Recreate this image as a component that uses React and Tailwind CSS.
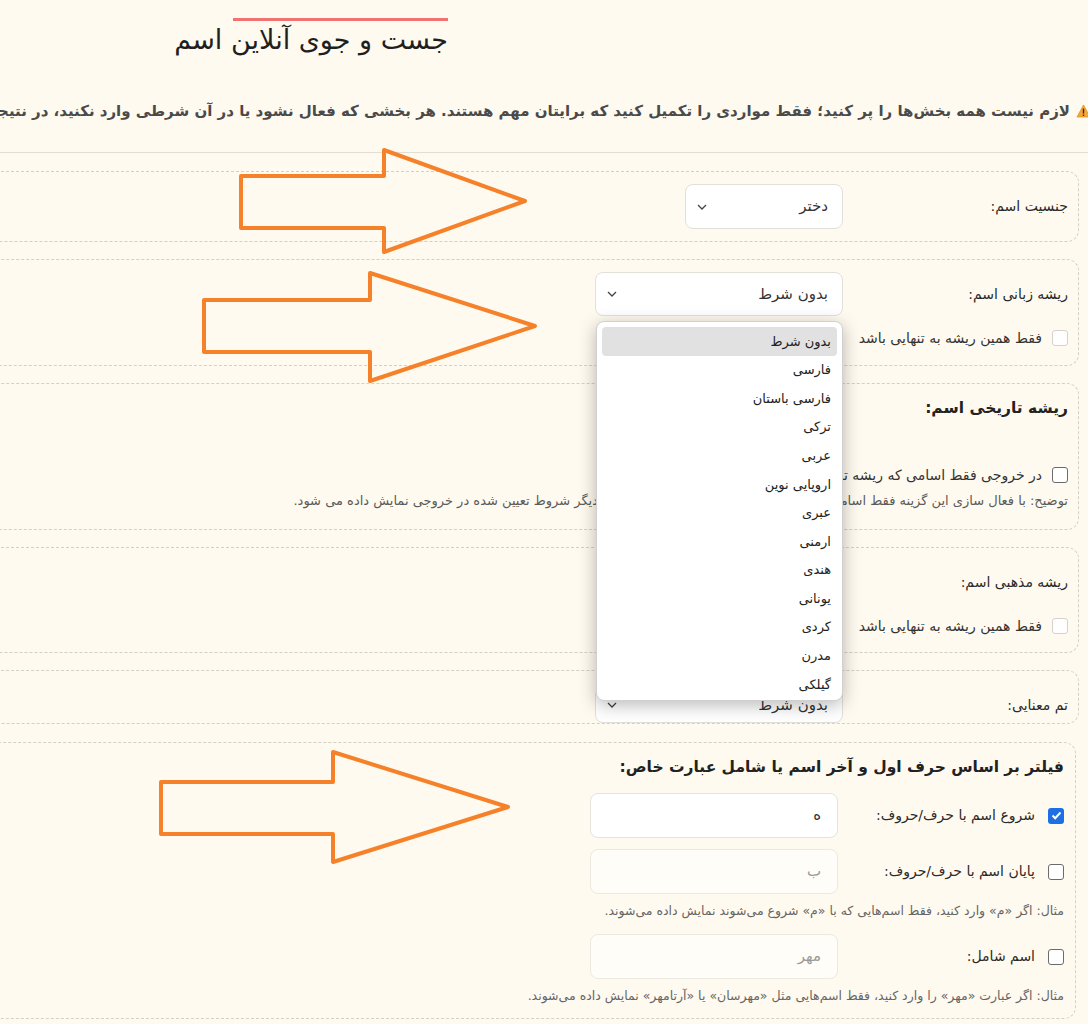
import { useState } from 'react';

const options = [
  'بدون شرط',
  'فارسی',
  'فارسی باستان',
  'ترکی',
  'عربی',
  'اروپایی نوین',
  'عبری',
  'ارمنی',
  'هندی',
  'یونانی',
  'کردی',
  'مدرن',
  'گیلکی',
];

function Chevron() {
  return (
    <svg width="10" height="6" viewBox="0 0 10 6" className="shrink-0">
      <polyline points="1,1 5,5 9,1" fill="none" stroke="#444" strokeWidth="1.3" />
    </svg>
  );
}

function Select({ value, width = 'w-[248px]', height = 'h-[44px]' }) {
  return (
    <div className={`${width} ${height} shrink-0 bg-white border border-[#e2e0da] rounded-lg flex items-center justify-between pr-[14px] pl-[11px] text-[15px] text-[#333]`}>
      <span>{value}</span>
      <Chevron />
    </div>
  );
}

function Box({ checked, faded }) {
  if (checked) {
    return (
      <span className="w-[16px] h-[16px] shrink-0 rounded-[3px] bg-[#1d6fe3] flex items-center justify-center">
        <svg width="11" height="9" viewBox="0 0 11 9">
          <polyline points="1.5,4.5 4.2,7.2 9.5,1.5" fill="none" stroke="#fff" strokeWidth="2" />
        </svg>
      </span>
    );
  }
  return (
    <span
      className={`w-[16px] h-[16px] shrink-0 rounded-[3px] bg-white border ${faded ? 'border-[#d6d3cc]' : 'border-[#6b6b6b]'}`}
    />
  );
}

function Section({ children, className = '' }) {
  return (
    <div className={`w-[1400px] mr-[9px] border border-dashed border-[#d3d0c8] rounded-xl pr-[10px] ${className}`}>
      {children}
    </div>
  );
}

export default function App() {
  const [open] = useState(true);

  return (
    <div className="relative w-[1088px] h-[1024px] overflow-hidden bg-[#fffaef] font-['DejaVu_Sans',sans-serif] text-[#2b2b2b]">
      <div dir="rtl" className="flex flex-col items-start">
        {/* title */}
        <div className="mr-[640px] pt-[18px] flex flex-col items-start">
          <div className="w-[215px] h-[3px] bg-[#f07270]" />
          <h1 className="mt-[1px] text-[27px] leading-[36px] font-normal text-[#1f1f1f] whitespace-nowrap">
            جست و جوی آنلاین اسم
          </h1>
        </div>

        {/* notice */}
        <div className="mt-[42px] mr-[-3px] flex items-center gap-[6px] whitespace-nowrap text-[15px] font-bold text-[#4a4a4a] leading-[22px]">
          <svg width="15" height="14" viewBox="0 0 15 14" className="shrink-0">
            <path d="M7.5 1 L14 13 H1 Z" fill="#f4a736" stroke="#e0902a" strokeWidth="0.8" strokeLinejoin="round" />
            <rect x="6.8" y="4.6" width="1.4" height="5" fill="#3a2a10" />
            <rect x="6.8" y="10.6" width="1.4" height="1.4" fill="#3a2a10" />
          </svg>
          <span>
            لازم نیست همه بخش‌ها را پر کنید؛ فقط مواردی را تکمیل کنید که برایتان مهم هستند. هر بخشی که فعال نشود یا در آن شرطی وارد نکنید، در نتیجه جستجو تأثیری نخواهد داشت.
          </span>
        </div>

        <div className="mt-[30px] w-full h-px bg-[#e3ded2]" />

        {/* gender */}
        <Section className="mt-[18px] py-3">
          <div className="flex items-center">
            <label className="w-[225px] shrink-0 text-[14px] font-medium text-[#2a2a2a]">جنسیت اسم:</label>
            <Select value="دختر" width="w-[158px]" height="h-[45px]" />
          </div>
        </Section>

        {/* language root */}
        <Section className="mt-[17px] pt-3 pb-[17px]">
          <div className="flex items-center">
            <label className="w-[225px] shrink-0 text-[14px] font-medium text-[#2a2a2a]">ریشه زبانی اسم:</label>
            <Select value="بدون شرط" />
          </div>
          <div className="mt-[12px] flex items-center gap-[10px] h-[20px] text-[14px] text-[#333]">
            <Box faded />
            <span>فقط همین ریشه به تنهایی باشد</span>
          </div>
        </Section>

        {/* historical root */}
        <Section className="mt-[17px] pt-3 pb-[18px]">
          <h3 className="text-[15.5px] leading-[24px] font-bold text-[#222]">ریشه تاریخی اسم:</h3>
          <div className="mt-[45px] flex items-center gap-[10px] h-[20px] text-[14px] text-[#333]">
            <Box />
            <span>در خروجی فقط اسامی که ریشه تاریخی مشخص دارند</span>
          </div>
          <p className="mt-[6px] text-[13px] leading-[20px] text-[#5a5a5a] whitespace-nowrap">
            توضیح: با فعال سازی این گزینه فقط اسامی که ریشه تاریخی آنها مطابق انتخاب است، دیگر شروط تعیین شده در خروجی نمایش داده می شود.
          </p>
        </Section>

        {/* religious root */}
        <Section className="mt-[17px] pt-3 pb-[16px]">
          <div className="flex items-center">
            <label className="w-[225px] shrink-0 text-[14px] font-medium text-[#2a2a2a]">ریشه مذهبی اسم:</label>
            <div className="w-[246px] h-[44px] shrink-0" />
          </div>
          <div className="mt-[12px] flex items-center gap-[10px] h-[20px] text-[14px] text-[#333]">
            <Box faded />
            <span>فقط همین ریشه به تنهایی باشد</span>
          </div>
        </Section>

        {/* theme */}
        <Section className="mt-[17px] pt-[16px] pb-0">
          <div className="flex items-center">
            <label className="w-[225px] shrink-0 text-[14px] font-medium text-[#2a2a2a]">تم معنایی:</label>
            <Select value="بدون شرط" height="h-[36px]" />
          </div>
        </Section>

        {/* letters filter */}
        <div className="mt-[18px] mr-[12px] w-[1400px] border border-dashed border-[#d3d0c8] rounded-xl pr-[11px] pt-3 pb-[13px]">
          <h3 className="text-[15.5px] leading-[24px] font-bold text-[#222]">
            فیلتر بر اساس حرف اول و آخر اسم یا شامل عبارت خاص:
          </h3>
          <div className="mt-[14px] flex items-center">
            <div className="w-[226px] shrink-0 flex items-center gap-[13px] text-[14px] text-[#2a2a2a]">
              <Box checked />
              <span>شروع اسم با حرف/حروف:</span>
            </div>
            <div className="w-[248px] h-[45px] bg-white border border-[#e6e3dc] rounded-lg flex items-center pr-[16px] text-[15px] text-[#333]">
              ه
            </div>
          </div>
          <div className="mt-[11px] flex items-center">
            <div className="w-[226px] shrink-0 flex items-center gap-[13px] text-[14px] text-[#2a2a2a]">
              <Box />
              <span>پایان اسم با حرف/حروف:</span>
            </div>
            <div className="w-[248px] h-[45px] bg-[#fffdf8] border border-[#ece9e2] rounded-lg flex items-center pr-[16px] text-[15px] text-[#9a9a9a]">
              ب
            </div>
          </div>
          <p className="mt-[8px] text-[12.5px] leading-[18px] text-[#666]">
            مثال: اگر «م» وارد کنید، فقط اسم‌هایی که با «م» شروع می‌شوند نمایش داده می‌شوند.
          </p>
          <div className="mt-[14px] flex items-center">
            <div className="w-[226px] shrink-0 flex items-center gap-[13px] text-[14px] text-[#2a2a2a]">
              <Box />
              <span>اسم شامل:</span>
            </div>
            <div className="w-[248px] h-[45px] bg-[#fffdf8] border border-[#ece9e2] rounded-lg flex items-center pr-[16px] text-[15px] text-[#9a9a9a]">
              مهر
            </div>
          </div>
          <p className="mt-[8px] text-[12.5px] leading-[18px] text-[#666]">
            مثال: اگر عبارت «مهر» را وارد کنید، فقط اسم‌هایی مثل «مهرسان» یا «آرتامهر» نمایش داده می‌شوند.
          </p>
        </div>
      </div>

      {/* open dropdown of the language select */}
      {open && (
        <div
          dir="rtl"
          className="absolute left-[596px] top-[321px] w-[247px] h-[380px] bg-white rounded-lg border border-[#d0d0d0] shadow-[0_4px_18px_rgba(0,0,0,0.28)] p-[5px] text-[13px] text-[#222]"
        >
          {options.map((o, i) => (
            <div
              key={o}
              className={`h-[28.6px] flex items-center pr-[6px] rounded ${i === 0 ? 'bg-[#e1e1e1]' : ''}`}
            >
              {o}
            </div>
          ))}
        </div>
      )}

      {/* annotation arrows */}
      <svg className="absolute inset-0 pointer-events-none" width="1088" height="1024">
        <g fill="none" stroke="#f5822a" strokeWidth="4" strokeLinejoin="round">
          <polygon points="241,176 384,176 384,150 525,201 384,252 384,228 241,228" />
          <polygon points="204,300 370,300 370,273 535,326 370,381 370,352 204,352" />
          <polygon points="161,782 333,782 333,752 508,807 333,862 333,834 161,834" />
        </g>
      </svg>
    </div>
  );
}
